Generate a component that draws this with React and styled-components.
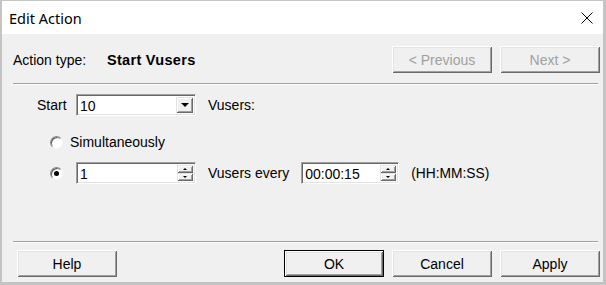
import styled, { createGlobalStyle, css } from "styled-components";

const Global = createGlobalStyle`
  body { margin: 0; background: #fff; }
  * { box-sizing: border-box; }
`;

const Window = styled.div`
  width: 606px;
  height: 285px;
  display: flex;
  flex-direction: column;
  border-style: solid;
  border-color: #c4c4c4;
  border-width: 1px 3px 3px 2px;
  font-family: "Liberation Sans", Arial, sans-serif;
  font-size: 14px;
  color: #000;
`;

const TitleBar = styled.div`
  height: 33px;
  background: #fff;
  display: flex;
  align-items: center;
  padding-left: 7px;
  padding-right: 7px;
`;

const Title = styled.span`
  font-family: "Noto Sans", "Open Sans", sans-serif;
  font-size: 14.5px;
  flex: 1;
`;

const Close = styled.svg`
  width: 12px;
  height: 12px;
  margin-right: 3px;
`;

const Body = styled.div`
  flex: 1;
  background: #f0f0f0;
  display: flex;
  flex-direction: column;
  padding: 12px 3px 5px 11px;
`;

const HeaderRow = styled.div`
  display: flex;
  align-items: center;
  height: 27px;
`;

const Label = styled.span`
  width: 94px;
`;

const Value = styled.span`
  font-weight: bold;
  font-size: 14.5px;
  letter-spacing: 0.3px;
  flex: 1;
`;

const Buttons = styled.div`
  display: flex;
  gap: 8px;
  margin-left: auto;
`;

const Button = styled.button`
  width: 100px;
  height: 27px;
  padding: 0;
  font: inherit;
  color: ${(p) => (p.disabled ? "#a0a0a0" : "#000")};
  background: #f0f0f0;
  border: ${(p) => (p.$default ? "1px solid #000" : "none")};
  box-shadow: inset 1px 1px #fff, inset -1px -1px #696969,
    inset 2px 2px #e3e3e3, inset -2px -2px #a0a0a0;
`;

const Separator = styled.div`
  height: 2px;
  margin-right: 2px;
  border-top: 1px solid #a0a0a0;
  border-bottom: 1px solid #fff;
  margin-top: ${(p) => p.$top}px;
`;

const Content = styled.div`
  flex: 1;
  display: flex;
  flex-direction: column;
  padding-top: 9px;
`;

const Row = styled.div`
  display: flex;
  align-items: center;
  height: 22px;
  padding-left: ${(p) => p.$indent}px;
  margin-top: ${(p) => p.$top || 0}px;
`;

const Text = styled.span`
  margin-left: ${(p) => p.$left || 0}px;
  width: ${(p) => (p.$w ? `${p.$w}px` : "auto")};
  font-size: ${(p) => p.$size || 14}px;
`;

const sunken = css`
  background: #fff;
  border-style: solid;
  border-width: 1px;
  border-color: #a0a0a0 #fff #fff #a0a0a0;
  box-shadow: inset 1px 1px #696969, inset -1px -1px #e3e3e3;
`;

const Field = styled.div`
  ${sunken};
  width: ${(p) => p.$w}px;
  height: 22px;
  display: flex;
  align-items: stretch;
  padding: 2px;
  margin-left: ${(p) => p.$left || 0}px;
`;

const FieldText = styled.span`
  flex: 1;
  line-height: 18px;
  padding-left: 1px;
`;

const raised = css`
  background: #f0f0f0;
  box-shadow: inset 1px 1px #e3e3e3, inset -1px -1px #696969,
    inset 2px 2px #fff, inset -2px -2px #a0a0a0;
`;

const DropButton = styled.div`
  ${raised};
  width: 17px;
  display: flex;
  align-items: center;
  justify-content: center;
`;

const Spin = styled.div`
  width: 16px;
  display: flex;
  flex-direction: column;
`;

const SpinButton = styled.div`
  ${raised};
  flex: 1;
  display: flex;
  align-items: center;
  justify-content: center;
`;

const Arrow = styled.span`
  width: 0;
  height: 0;
  border-left: ${(p) => p.$s}px solid transparent;
  border-right: ${(p) => p.$s}px solid transparent;
  ${(p) =>
    p.$up
      ? `border-bottom: ${p.$h}px solid #000;`
      : `border-top: ${p.$h}px solid #000;`}
`;

const Radio = styled.span`
  width: 13px;
  height: 13px;
  border-radius: 50%;
  background: #fff;
  border: 1px solid;
  border-color: #8a8a8a #f8f8f8 #f8f8f8 #8a8a8a;
  box-shadow: inset 1px 1px #5a5a5a;
  display: flex;
  align-items: center;
  justify-content: center;
  &::after {
    content: "";
    width: 5px;
    height: 5px;
    border-radius: 50%;
    background: ${(p) => (p.$checked ? "#000" : "transparent")};
  }
`;

const Footer = styled.div`
  display: flex;
  flex-direction: column;
`;

const FooterButtons = styled.div`
  display: flex;
  margin-top: 7px;
  padding-left: 4px;
`;

function SpinField({ value, w, left }) {
  return (
    <Field $w={w} $left={left}>
      <FieldText>{value}</FieldText>
      <Spin>
        <SpinButton><Arrow $up $s={2} $h={2} /></SpinButton>
        <SpinButton><Arrow $s={2} $h={2} /></SpinButton>
      </Spin>
    </Field>
  );
}

export default function App() {
  return (
    <>
      <Global />
      <Window>
        <TitleBar>
          <Title>Edit Action</Title>
          <Close viewBox="0 0 12 12">
            <path d="M0.5 0.5L11.5 11.5M11.5 0.5L0.5 11.5" stroke="#000" strokeWidth="1" />
          </Close>
        </TitleBar>
        <Body>
          <HeaderRow>
            <Label>Action type:</Label>
            <Value>Start Vusers</Value>
            <Buttons>
              <Button disabled>&lt; Previous</Button>
              <Button disabled>Next &gt;</Button>
            </Buttons>
          </HeaderRow>
          <Separator $top={10} />
          <Content>
            <Row $indent={24}>
              <Text $w={39}>Start</Text>
              <Field $w={120}>
                <FieldText>10</FieldText>
                <DropButton><Arrow $s={4} $h={4} /></DropButton>
              </Field>
              <Text $left={12}>Vusers:</Text>
            </Row>
            <Row $indent={37} $top={15}>
              <Radio />
              <Text $left={7}>Simultaneously</Text>
            </Row>
            <Row $indent={37} $top={9}>
              <Radio $checked />
              <SpinField value="1" w={120} left={13} />
              <Text $left={12}>Vusers every</Text>
              <SpinField value="00:00:15" w={98} left={12} />
              <Text $left={12} $size={13.8}>(HH:MM:SS)</Text>
            </Row>
          </Content>
          <Footer>
            <Separator $top={0} />
            <FooterButtons>
              <Button>Help</Button>
              <Buttons>
                <Button $default>OK</Button>
                <Button>Cancel</Button>
                <Button>Apply</Button>
              </Buttons>
            </FooterButtons>
          </Footer>
        </Body>
      </Window>
    </>
  );
}
